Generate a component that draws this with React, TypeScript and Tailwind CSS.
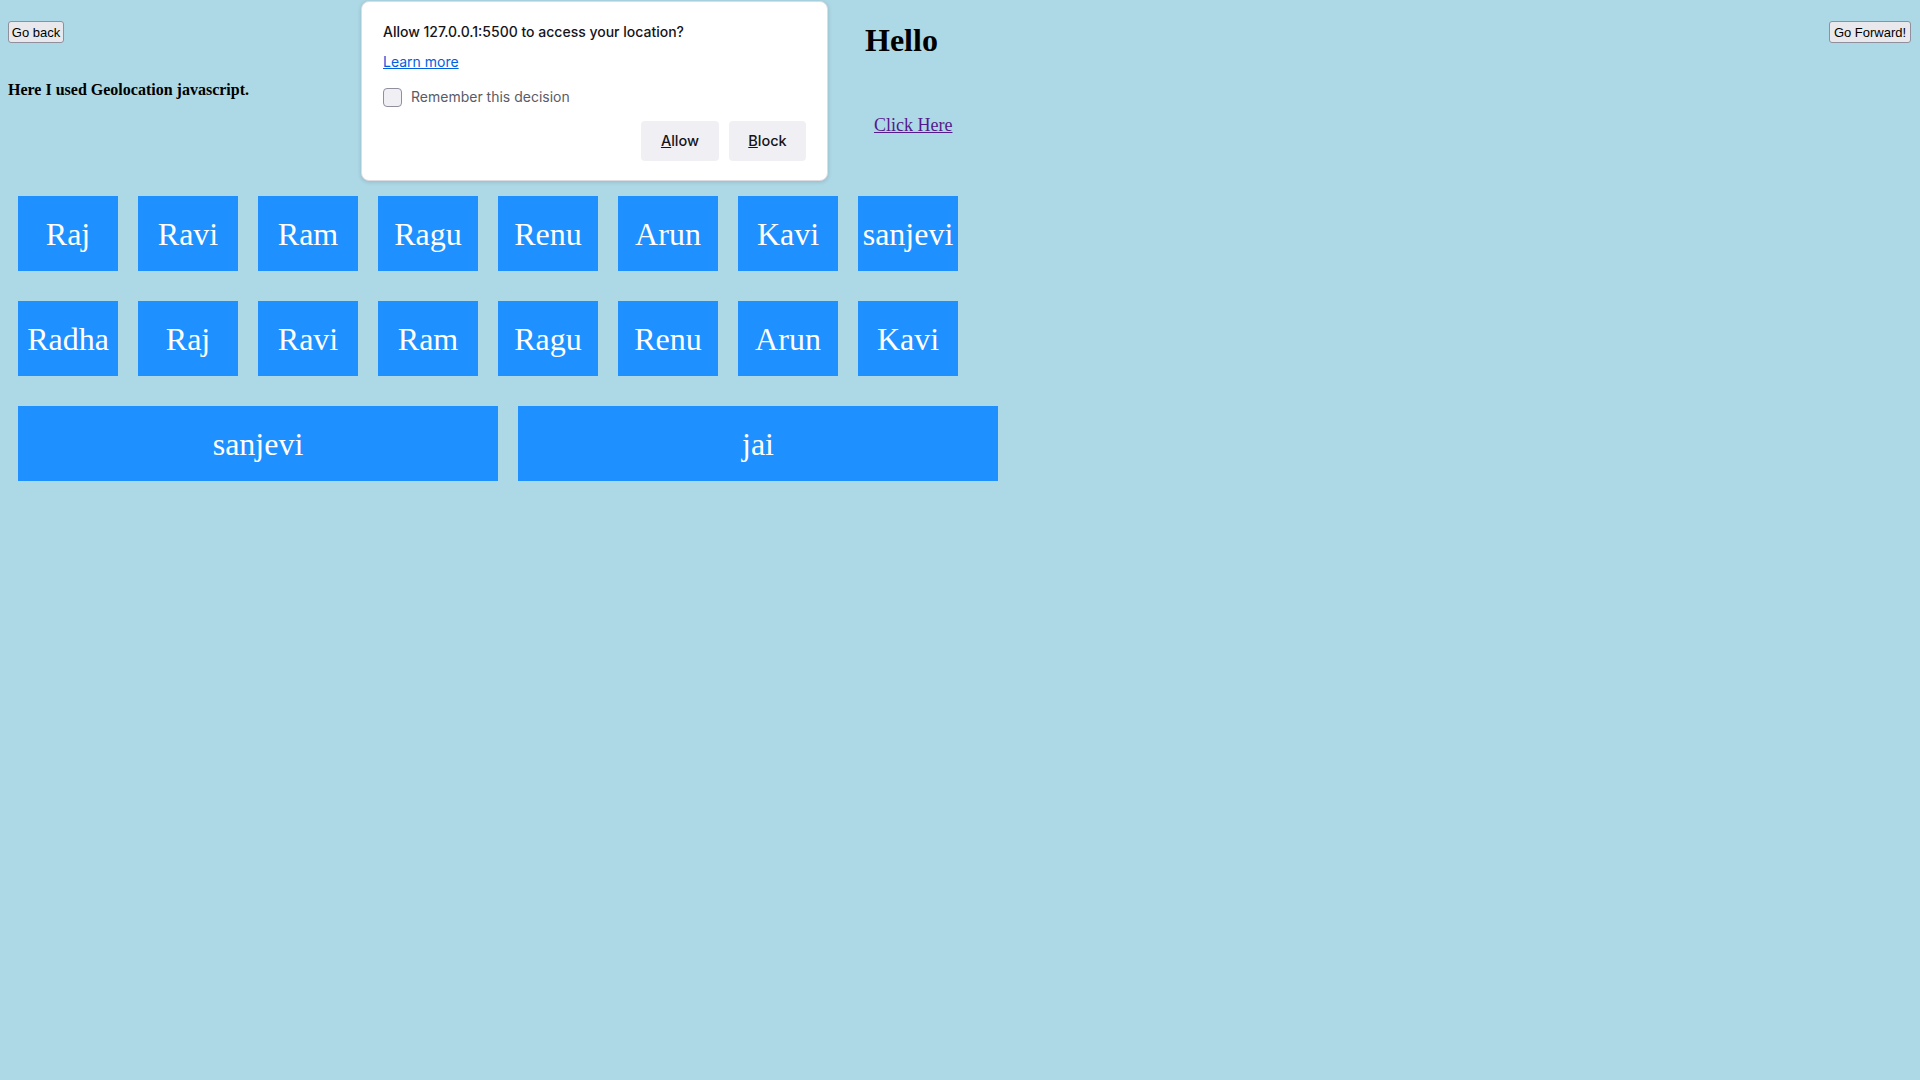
import React from "react";

const row1 = ["Raj", "Ravi", "Ram", "Ragu", "Renu", "Arun", "Kavi", "sanjevi"];
const row2 = ["Radha", "Raj", "Ravi", "Ram", "Ragu", "Renu", "Arun", "Kavi"];
const row3 = ["sanjevi", "jai"];

const serif = "font-['Liberation_Serif','Times_New_Roman',serif]";
const ui = "font-['Inter','Open_Sans',sans-serif]";

function Box({ label, wide }: { label: string; wide?: boolean }) {
  return (
    <div
      className={`${wide ? "w-[480px]" : "w-[100px]"} h-[75px] bg-[#1e90ff] text-white flex items-center justify-center text-[32px] leading-none ${serif}`}
    >
      {label}
    </div>
  );
}

export default function App() {
  return (
    <div className="relative min-h-screen w-full bg-[#add8e6] text-black">
      {/* Header */}
      <div className="relative h-[196px] flex">
        <div className="w-[865px] shrink-0 flex flex-col pl-[8px]">
          <button className="mt-[21px] w-[56px] h-[22px] rounded-[3px] border border-[#8f8f9d] bg-[#e9e9ed] text-[13px] leading-none text-black font-['Liberation_Sans',Arial,sans-serif] flex items-center justify-center">
            Go back
          </button>
          <div className={`mt-[38px] text-[16px] leading-[18px] font-bold ${serif}`}>
            Here I used Geolocation javascript.
          </div>
        </div>
        <div className="flex flex-col">
          <div className={`mt-[22px] text-[32px] leading-[36px] font-bold ${serif}`}>Hello</div>
          <a href="#" className={`mt-[57px] ml-[9px] text-[18px] leading-[20px] text-[#551a8b] underline ${serif}`}>
            Click Here
          </a>
        </div>
        <div className="flex-1 flex justify-end pr-[9px]">
          <button className="mt-[21px] w-[82px] h-[22px] rounded-[3px] border border-[#8f8f9d] bg-[#e9e9ed] text-[13px] leading-none text-black font-['Liberation_Sans',Arial,sans-serif] flex items-center justify-center">
            Go Forward!
          </button>
        </div>
      </div>

      {/* Boxes */}
      <div className="pl-[18px] flex flex-col gap-[30px]">
        <div className="flex gap-[20px]">
          {row1.map((n, i) => (
            <Box key={i} label={n} />
          ))}
        </div>
        <div className="flex gap-[20px]">
          {row2.map((n, i) => (
            <Box key={i} label={n} />
          ))}
        </div>
        <div className="flex gap-[20px]">
          {row3.map((n, i) => (
            <Box key={i} label={n} wide />
          ))}
        </div>
      </div>

      {/* Permission popup */}
      <div
        className={`absolute left-[361px] top-[1px] w-[467px] h-[180px] bg-white rounded-[8px] border border-[#dcdce2] shadow-[0_1px_4px_rgba(0,0,0,0.15)] px-[21px] ${ui}`}
      >
        <div className="mt-[20px] text-[14px] leading-[20px] font-medium text-[#15141a]">
          Allow 127.0.0.1:5500 to access your location?
        </div>
        <a href="#" className="block mt-[10px] w-fit text-[14px] leading-[20px] text-[#0061e0] underline">
          Learn more
        </a>
        <div className="mt-[15px] flex items-center gap-[9px]">
          <div className="w-[19px] h-[19px] rounded-[4px] border border-[#8f8f9d] bg-[#f0f0f4]" />
          <span className="text-[14px] leading-[20px] text-[#5b5b66]">Remember this decision</span>
        </div>
        <div className="mt-[14px] flex justify-end gap-[10px]">
          <button className="w-[78px] h-[40px] rounded-[4px] bg-[#f0f0f4] text-[14.5px] font-medium text-[#15141a]">
            <span className="underline">A</span>llow
          </button>
          <button className="w-[77px] h-[40px] rounded-[4px] bg-[#f0f0f4] text-[14.5px] font-medium text-[#15141a]">
            <span className="underline">B</span>lock
          </button>
        </div>
      </div>
    </div>
  );
}
